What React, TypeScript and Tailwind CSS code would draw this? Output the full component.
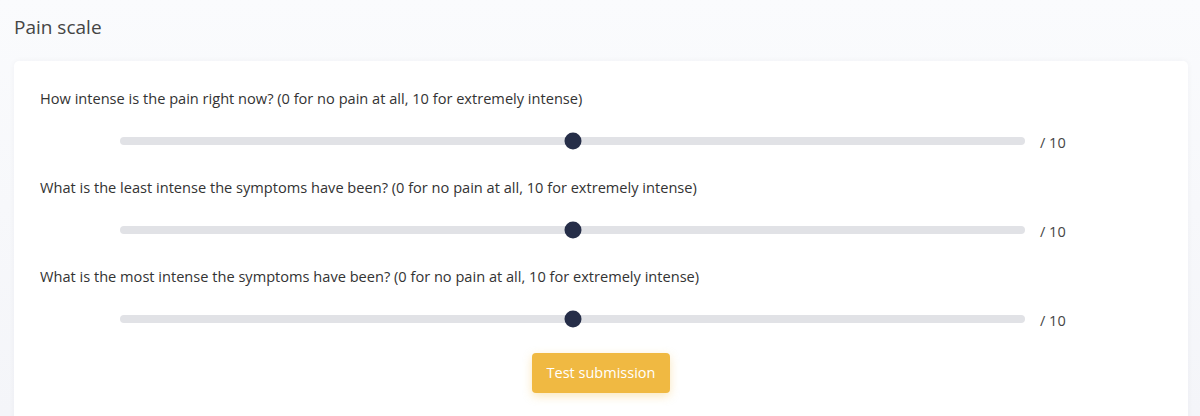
const questions = [
  "How intense is the pain right now? (0 for no pain at all, 10 for extremely intense)",
  "What is the least intense the symptoms have been? (0 for no pain at all, 10 for extremely intense)",
  "What is the most intense the symptoms have been? (0 for no pain at all, 10 for extremely intense)",
];

const Scale = ({ value, max = 10 }: { value: number; max?: number }) => {
  const pct = (value / max) * 100;
  return (
    <div className="flex h-[34px] items-center pl-[80px]">
      <div className="relative h-[8px] flex-1 rounded-full bg-[#e1e2e6]">
        <div
          className="absolute top-1/2 h-[17px] w-[17px] -translate-x-1/2 -translate-y-1/2 rounded-full bg-[#262e48]"
          style={{ left: `${pct}%` }}
        />
      </div>
      <span className="w-[137px] shrink-0 pl-[15px] pt-[4px] text-[14.5px] text-[#454545]">/ {max}</span>
    </div>
  );
};

export default function App() {
  return (
    <div
      className="h-[416px] overflow-hidden bg-gradient-to-b from-[#fafbfd] to-[#f4f5f9] pl-[14px] pr-[12px]"
      style={{ fontFamily: "'Open Sans', 'Noto Sans', sans-serif" }}
    >
      <h1 className="flex h-[61px] items-center pb-[6px] text-[19px] text-[#454545]">Pain scale</h1>
      <div className="min-h-[400px] rounded-[5px] bg-white px-[26px] pt-[27px] shadow-[0_0_6px_rgba(20,30,80,0.04)]">
        {questions.map((q, i) => (
          <div key={i} className={i > 0 ? "mt-[19px]" : ""}>
            <p className="h-[20px] text-[14.6px] leading-[20px] text-[#333]">{q}</p>
            <div className="mt-[16px]">
              <Scale value={5} />
            </div>
          </div>
        ))}
        <div className="mt-[17px] flex justify-center">
          <button className="h-[40px] w-[138px] rounded-[4px] bg-[#f0b942] text-[14.5px] text-white shadow-[0_3px_10px_rgba(240,185,66,0.35)]">
            Test submission
          </button>
        </div>
      </div>
    </div>
  );
}
